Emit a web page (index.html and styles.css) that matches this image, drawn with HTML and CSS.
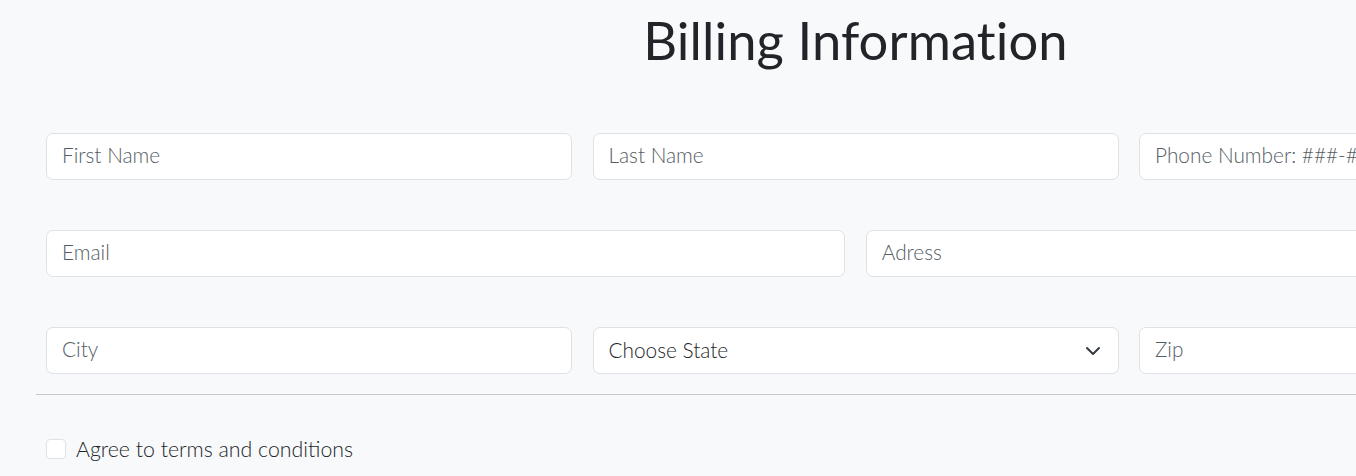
FILE: index.html
```html
<!DOCTYPE html>
<html lang="en">
<head>
<meta charset="utf-8">
<title>Billing Information</title>
<link rel="stylesheet" href="styles.css">
</head>
<body>
<div class="viewport">
  <div class="container">
    <h1 class="title">Billing Information</h1>
    <form class="form">
      <div class="row row-3">
        <input class="field" type="text" placeholder="First Name">
        <input class="field" type="text" placeholder="Last Name">
        <input class="field" type="text" placeholder="Phone Number: ###-###-####">
      </div>
      <div class="row row-2">
        <input class="field" type="email" placeholder="Email">
        <input class="field" type="text" placeholder="Adress">
      </div>
      <div class="row row-3">
        <input class="field" type="text" placeholder="City">
        <div class="select-wrap">
          <select class="field select">
            <option>Choose State</option>
          </select>
          <svg class="chevron" viewBox="0 0 16 16" width="16" height="16" aria-hidden="true">
            <path d="M2 5l6 6 6-6" fill="none" stroke="#343a40" stroke-width="2" stroke-linecap="round" stroke-linejoin="round"/>
          </svg>
        </div>
        <input class="field" type="text" placeholder="Zip">
      </div>
      <hr class="divider">
      <label class="check">
        <span class="box"></span>
        <span class="check-label">Agree to terms and conditions</span>
      </label>
    </form>
  </div>
</div>
</body>
</html>
```

FILE: styles.css
```css
html, body {
  margin: 0;
  padding: 0;
  background: #f8f9fa;
  height: 100%;
  overflow: hidden;
}

.viewport {
  width: 1356px;
  height: 476px;
  overflow: hidden;
}

.container {
  width: 1675px;
  box-sizing: border-box;
  padding-left: 36px;
  font-family: "Lato", "Open Sans", sans-serif;
  color: #212529;
}

.title {
  margin: 0;
  padding-top: 10px;
  height: 133px;
  box-sizing: border-box;
  text-align: center;
  font-size: 52.5px;
  font-weight: 400;
  line-height: 60px;
  letter-spacing: 0.1px;
}

.form {
  margin: 0;
}

.row {
  display: grid;
  column-gap: 20.5px;
  padding: 0 10px;
  margin-bottom: 50px;
}

.row-3 {
  grid-template-columns: repeat(3, 1fr);
}

.row-2 {
  grid-template-columns: repeat(2, 1fr);
}

.row:nth-of-type(3) {
  margin-bottom: 20px;
}

.field {
  display: block;
  width: 100%;
  box-sizing: border-box;
  height: 47px;
  padding: 0 16px 4px 15px;
  border: 1px solid #dee2e6;
  border-radius: 7px;
  background: #ffffff;
  font-family: "Lato", "Open Sans", sans-serif;
  font-size: 20.8px;
  font-weight: 300;
  color: #212529;
  outline: none;
}

.field::placeholder {
  color: #555d64;
  opacity: 1;
}

.select-wrap {
  position: relative;
}

.select {
  appearance: none;
  -webkit-appearance: none;
  color: #212529;
  padding-top: 0;
  padding-bottom: 2px;
}

.chevron {
  position: absolute;
  right: 18px;
  top: 16px;
  pointer-events: none;
}

.divider {
  margin: 0 0 44px 0;
  border: 0;
  border-top: 1px solid #c6c8ca;
  height: 0;
}

.check {
  display: flex;
  align-items: center;
  gap: 10px;
  padding-left: 10px;
  font-size: 21.3px;
  font-weight: 300;
  margin-top: -2px;
}

.box {
  width: 18px;
  height: 18px;
  border: 1px solid #dee2e6;
  border-radius: 4px;
  background: #ffffff;
  flex: none;
}

.check-label {
  line-height: 24px;
}
```
